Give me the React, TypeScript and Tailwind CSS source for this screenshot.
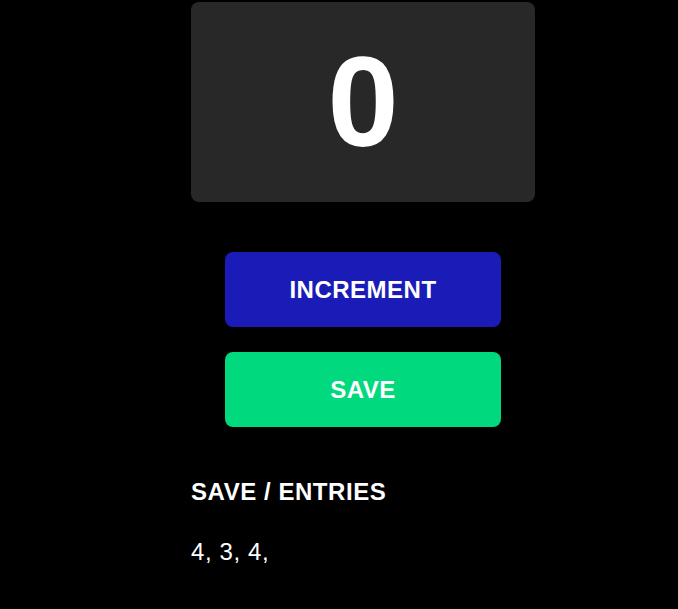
export default function App() {
  return (
    <div className="min-h-screen bg-black text-white" style={{ fontFamily: '"Liberation Sans", Arial, sans-serif' }}>
      <div className="ml-[191px] w-[344px] pt-[2px] flex flex-col">
        <div className="h-[200px] w-full rounded-lg bg-[#282828] flex items-center justify-center">
          <span className="text-[128px] font-bold leading-none">0</span>
        </div>
        <div className="mt-[50px] flex flex-col items-center gap-[25px]">
          <button className="h-[75px] w-[276px] rounded-lg bg-[#1b1bb8] text-2xl font-bold tracking-[0.5px] text-white">
            INCREMENT
          </button>
          <button className="h-[75px] w-[276px] rounded-lg bg-[#00d97e] text-2xl font-bold tracking-[0.5px] text-white">
            SAVE
          </button>
        </div>
        <h2 className="mt-[49px] text-2xl font-bold tracking-[0.55px]">SAVE / ENTRIES</h2>
        <p className="mt-[28px] text-2xl tracking-[0.6px]">4, 3, 4,</p>
      </div>
    </div>
  );
}
